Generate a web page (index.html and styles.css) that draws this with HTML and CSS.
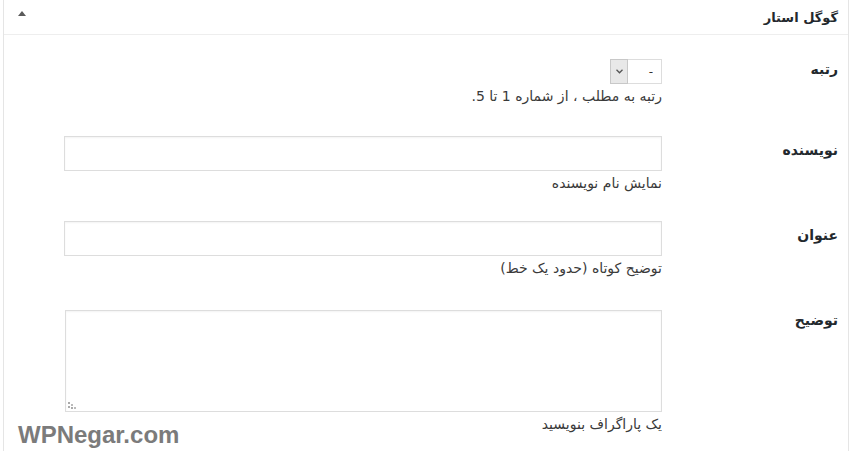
FILE: index.html
```html
<!DOCTYPE html>
<html lang="fa" dir="rtl">
<head>
    <meta charset="UTF-8">
    <title>گوگل استار</title>
    <link rel="stylesheet" href="styles.css">
</head>
<body>
    <div class="postbox">
        <div class="postbox-header">
            <h2 class="hndle">گوگل استار</h2>
            <button class="toggle" type="button" aria-label="باز و بسته کردن">
                <svg width="8" height="5" viewBox="0 0 8 5"><polygon points="0,5 8,5 4,0" fill="#5a5a5a"/></svg>
            </button>
        </div>

        <div class="inside">
            <div class="form-row">
                <label class="form-label" for="gs-rating">رتبه</label>
                <div class="form-field">
                    <span class="select-wrap">
                        <select id="gs-rating">
                            <option>-</option>
                            <option>1</option>
                            <option>2</option>
                            <option>3</option>
                            <option>4</option>
                            <option>5</option>
                        </select>
                        <span class="select-arrow">
                            <svg width="7" height="5" viewBox="0 0 7 5"><polyline points="0.5,0.8 3.5,3.8 6.5,0.8" fill="none" stroke="#555" stroke-width="1.3"/></svg>
                        </span>
                    </span>
                    <p class="description">رتبه به مطلب ، از شماره 1 تا 5.</p>
                </div>
            </div>

            <div class="form-row">
                <label class="form-label" for="gs-author">نویسنده</label>
                <div class="form-field">
                    <input type="text" id="gs-author" class="text-input">
                    <p class="description">نمایش نام نویسنده</p>
                </div>
            </div>

            <div class="form-row">
                <label class="form-label" for="gs-title">عنوان</label>
                <div class="form-field">
                    <input type="text" id="gs-title" class="text-input">
                    <p class="description">توضیح کوتاه (حدود یک خط)</p>
                </div>
            </div>

            <div class="form-row">
                <label class="form-label" for="gs-desc">توضیح</label>
                <div class="form-field">
                    <span class="area-wrap">
                        <textarea id="gs-desc" class="text-area"></textarea>
                        <!-- resize grip in the corner -->
                        <svg class="grip" width="8" height="7" viewBox="0 0 8 7">
                            <rect x="0" y="0" width="2" height="2" fill="#aaa"/>
                            <rect x="0" y="4" width="2" height="2" fill="#aaa"/>
                            <rect x="3" y="2" width="2" height="2" fill="#bbb"/>
                            <rect x="3" y="5" width="2" height="2" fill="#aaa"/>
                            <rect x="6" y="5" width="2" height="2" fill="#bbb"/>
                        </svg>
                    </span>
                    <p class="description">یک پاراگراف بنویسید</p>
                </div>
            </div>
        </div>
    </div>

    <div class="watermark" dir="ltr">WPNegar.com</div>
</body>
</html>
```

FILE: styles.css
```css
body {
    margin: 0;
    padding: 0;
    background-color: #ffffff;
    font-family: "DejaVu Sans", sans-serif;
    color: #333;
    height: 451px;
    overflow: hidden;
}

.postbox {
    margin: 0 3px;
    border-left: 1px solid #e5e5e5;
    border-right: 1px solid #e5e5e5;
    background-color: #ffffff;
    position: relative;
    height: 451px;
}

.postbox-header {
    height: 34px;
    border-bottom: 1px solid #eeeeee;
    display: flex;
    align-items: center;
    justify-content: space-between;
    padding: 0 10px 0 13px;
}

.hndle {
    margin: 0;
    font-size: 13px;
    font-weight: bold;
    color: #23282d;
}

.toggle {
    border: none;
    background: none;
    padding: 0;
    width: 10px;
    height: 10px;
    display: flex;
    align-items: center;
    justify-content: center;
    margin-top: -8px;
}

.inside {
    padding: 24px 10px 0 0;
}

.form-row {
    display: flex;
    align-items: flex-start;
    padding-bottom: 30px;
}

.form-row:nth-child(2) {
    padding-bottom: 28px;
}

.form-row:nth-child(3) {
    padding-bottom: 32px;
}

.form-label {
    width: 176px;
    flex-shrink: 0;
    font-size: 14px;
    font-weight: bold;
    color: #23282d;
    line-height: 20px;
    padding-top: 0;
}

.form-row:nth-child(2) .form-label,
.form-row:nth-child(3) .form-label {
    padding-top: 4px;
}

.form-field {
    width: 598px;
}

.select-wrap {
    position: relative;
    display: block;
    width: 52px;
    height: 25px;
}

.select-wrap select {
    appearance: none;
    -webkit-appearance: none;
    width: 52px;
    height: 25px;
    border: 1px solid #dddddd;
    background-color: #ffffff;
    font-family: "DejaVu Sans", sans-serif;
    font-size: 12px;
    color: #333;
    padding: 0 8px 0 0;
    margin: 0;
    box-sizing: border-box;
}

.select-arrow {
    position: absolute;
    left: 0;
    top: 0;
    width: 18px;
    height: 25px;
    box-sizing: border-box;
    border: 1px solid #c8c8c8;
    background-color: #e8e8e8;
    display: flex;
    align-items: center;
    justify-content: center;
    pointer-events: none;
}

.text-input {
    display: block;
    width: 598px;
    height: 35px;
    border: 1px solid #dddddd;
    box-shadow: inset 0 1px 2px rgba(0, 0, 0, 0.05);
    box-sizing: border-box;
    margin: 0;
    font-family: "DejaVu Sans", sans-serif;
}

.area-wrap {
    position: relative;
    display: block;
    width: 597px;
}

.text-area {
    display: block;
    width: 597px;
    height: 102px;
    border: 1px solid #dddddd;
    box-shadow: inset 0 1px 2px rgba(0, 0, 0, 0.05);
    box-sizing: border-box;
    margin: 0;
    resize: none;
    font-family: "DejaVu Sans", sans-serif;
}

.grip {
    position: absolute;
    left: 3px;
    bottom: 3px;
}

.description {
    margin: 3px 0 0;
    font-size: 14px;
    line-height: 19px;
    color: #3a3a3a;
}

.watermark {
    position: absolute;
    left: 18px;
    top: 421px;
    font-family: "Liberation Sans", Arial, sans-serif;
    font-size: 24px;
    font-weight: bold;
    color: #7b7b7b;
}
```
